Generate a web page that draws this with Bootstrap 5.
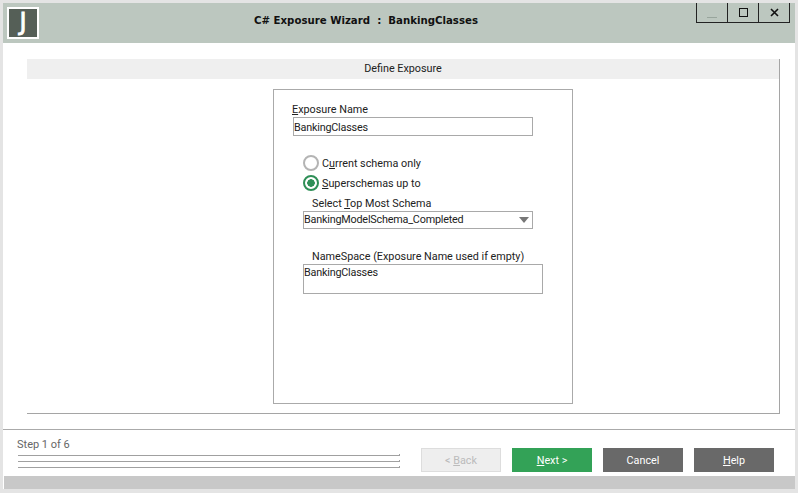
<!DOCTYPE html>
<html lang="en">
<head>
<meta charset="utf-8">
<title>C# Exposure Wizard</title>
<link href="https://cdn.jsdelivr.net/npm/bootstrap@5.3.0/dist/css/bootstrap.min.css" rel="stylesheet">
<style>
html,body{margin:0;height:493px;overflow:hidden}
body{background:#e4e4e4;font-family:"Roboto","Noto Sans",sans-serif;font-size:10.8px;color:#222;line-height:16px}
.wiz-win{width:798px;height:493px;padding:3px 3px 4px 3px}
.wiz-inner{background:#fff;height:100%}
.wiz-head{height:40px;background:#bcc7bf;position:relative;flex:none}
.wiz-logo{width:32px;height:32px;border:2px solid #fff;background:#555f57;margin:4px 0 0 4px;color:#fff;font:400 24px/27px "DejaVu Sans",sans-serif;-webkit-text-stroke:.8px #fff;text-align:center}
.wiz-title{font:700 10.2px/14px "DejaVu Sans",sans-serif;color:#111;margin:0;width:100%;text-align:center;position:absolute;top:11px;left:-33px}
.wiz-ctrls{position:absolute;top:0;right:5px;border:1px solid #222;border-top:0;height:20px}
.wiz-ctrl{width:31px;height:19px;border:0;border-left:1px solid #222;padding:0;background:transparent}
.wiz-ctrl:first-child{border-left:0;width:30px}
.wiz-panel{margin:16px 15px 0 24px;height:355px;flex:none;border-right:1px solid #a5a5a5;border-bottom:1px solid #a5a5a5}
.wiz-band{height:20px;background:#efefef;text-align:center;line-height:19px;color:#222}
.wiz-box{width:300px;height:315px;margin:10px 0 0 246px;border:1px solid #aaa;padding:11px 0 0 0}
.wiz-lab{display:block;margin:0;line-height:16px;color:#222}
.wiz-input{display:block;width:240px;height:19px;border:1px solid #a9a9a9;border-radius:0;padding:1px 0 0 0;margin:0 0 0 19px;font-size:10.8px;letter-spacing:-.2px;line-height:16px;color:#222;background:#fff}
.wiz-input:focus{box-shadow:none;border-color:#a9a9a9}
.wiz-radio{display:flex;align-items:center;margin:0 0 4px 29px;height:16px;padding:0;min-height:0}
.wiz-radio label{padding-top:2px}
.wiz-radio .form-check-input{width:16px;height:16px;margin:0 3px 0 0;float:none;background-image:none;border:2px solid #b4b4b4;background-color:#fff;flex:none}
.wiz-radio .form-check-input:checked{border:2px solid #2f8f57;background-color:#fff;background-image:radial-gradient(circle,#2f8f57 0 3.5px,transparent 4px)}
.wiz-select{width:230px;margin-left:29px;display:flex;justify-content:space-between;align-items:center;height:18px;border:1px solid #a9a9a9;line-height:15px;letter-spacing:-.2px;color:#222;padding:0 3px 1px 0}
.wiz-caret{width:0;height:0;border-left:5px solid transparent;border-right:5px solid transparent;border-top:6px solid #777}
.wiz-area{display:block;width:240px;height:30px;border:1px solid #a9a9a9;margin-left:29px;border-radius:0;font-size:10.8px;letter-spacing:-.2px;line-height:15px;color:#222;resize:none;min-height:0;padding:0;overflow:hidden}
.wiz-area:focus{box-shadow:none;border-color:#a9a9a9}
.wiz-foot{margin-top:15px;border-top:1px solid #aaa;height:46px;padding:7px 21px 0 14px;flex:none}
.wiz-step{color:#666;line-height:16px;margin:0;font-size:11px}
.wiz-rule{width:382px;height:1px;background:#a0a0a0;margin:0 0 5px 1px;position:relative}
.wiz-rule::after{content:"";position:absolute;right:0;top:-1px;width:1px;height:1px;background:#a0a0a0}
.wiz-rules{padding-top:2px}
.wiz-btn{width:80px;height:24px;border-radius:0;border:0;padding:1px 0 0;font-size:10.8px;line-height:22px;color:#fff;--bs-btn-color:#fff;--bs-btn-hover-color:#fff}
.wiz-back{--bs-btn-disabled-bg:#eee;--bs-btn-disabled-border-color:#ddd;--bs-btn-disabled-color:#bbb;--bs-btn-disabled-opacity:1;border:1px solid #ddd;padding:1px 0 0;line-height:20px}
.wiz-next{background:#33a257}
.wiz-grey{background:#696969}
.wiz-status{height:13px;background:#c8c8c8;margin:1px 0 0 1px;flex:none}
.wiz-btns{margin-top:11px;gap:11px}
.wiz-key{text-decoration:underline}
.fw-lab-1{margin:1px 0 -1px 18px}
.fw-lab-2{margin:5px 0 -1px 38px}
.fw-lab-3{margin:20px 0 -1px 38px}
.radio-first{margin-top:19px}
</style>
</head>
<body>
<div class="wiz-win">
  <div class="wiz-inner d-flex flex-column">
    <div class="wiz-head">
      <div class="wiz-logo">J</div>
      <p class="wiz-title">C# Exposure Wizard&nbsp; :&nbsp; BankingClasses</p>
      <div class="wiz-ctrls d-flex">
        <button class="wiz-ctrl d-flex align-items-center justify-content-center" type="button" aria-label="Minimize"><svg width="12" height="12" viewBox="0 0 12 12"><path d="M1 10.5h10" stroke="#98a59c" fill="none"/></svg></button>
        <button class="wiz-ctrl d-flex align-items-center justify-content-center" type="button" aria-label="Maximize"><svg width="11" height="11" viewBox="0 0 11 11"><rect x="1.5" y="1.5" width="8" height="8" stroke="#111" fill="none"/></svg></button>
        <button class="wiz-ctrl d-flex align-items-center justify-content-center" type="button" aria-label="Close"><svg width="11" height="11" viewBox="0 0 11 11"><path d="M2 2l7 7M9 2l-7 7" stroke="#111" stroke-width="1.6" fill="none"/></svg></button>
      </div>
    </div>
    <div class="wiz-panel">
      <div class="wiz-band">Define Exposure</div>
      <div class="wiz-box">
        <label class="wiz-lab fw-lab-1"><span class="wiz-key">E</span>xposure Name</label>
        <input class="form-control wiz-input" value="BankingClasses">
        <div class="form-check wiz-radio radio-first"><input class="form-check-input" type="radio" name="s" id="r1"><label for="r1">C<span class="wiz-key">u</span>rrent schema only</label></div>
        <div class="form-check wiz-radio"><input class="form-check-input" type="radio" name="s" id="r2" checked><label for="r2"><span class="wiz-key">S</span>uperschemas up to</label></div>
        <label class="wiz-lab fw-lab-2">Select <span class="wiz-key">T</span>op Most Schema</label>
        <div class="wiz-select"><span>BankingModelSchema_Completed</span><span class="wiz-caret"></span></div>
        <label class="wiz-lab fw-lab-3">NameSpace (Exposure Name used if empty)</label>
        <textarea class="form-control wiz-area">BankingClasses</textarea>
      </div>
    </div>
    <div class="wiz-foot d-flex justify-content-between">
      <div>
        <p class="wiz-step">Step 1 of 6</p>
        <div class="wiz-rules"><div class="wiz-rule"></div><div class="wiz-rule"></div><div class="wiz-rule"></div></div>
      </div>
      <div class="d-flex wiz-btns">
        <button class="btn wiz-btn wiz-back" type="button" disabled>&lt; <span class="wiz-key">B</span>ack</button>
        <button class="btn wiz-btn wiz-next" type="button"><span class="wiz-key">N</span>ext &gt;</button>
        <button class="btn wiz-btn wiz-grey" type="button">Cancel</button>
        <button class="btn wiz-btn wiz-grey" type="button"><span class="wiz-key">H</span>elp</button>
      </div>
    </div>
    <div class="wiz-status"></div>
  </div>
</div>
<script src="https://cdn.jsdelivr.net/npm/bootstrap@5.3.0/dist/js/bootstrap.bundle.min.js"></script>
</body>
</html>
